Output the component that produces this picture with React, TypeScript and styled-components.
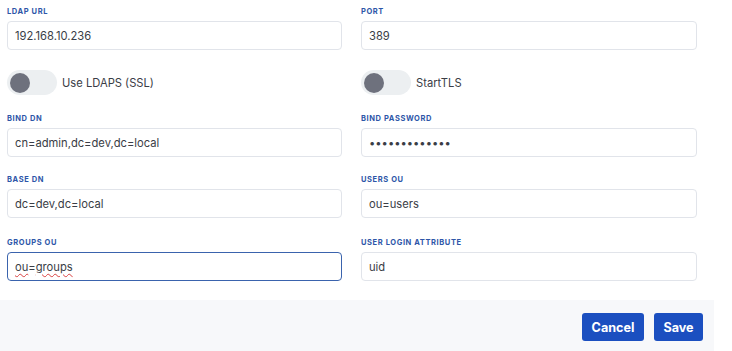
import React from "react";
import styled, { createGlobalStyle } from "styled-components";

const GlobalStyle = createGlobalStyle`
  html, body {
    margin: 0;
    padding: 0;
    background: #ffffff;
    font-family: Inter, "Noto Sans", "Liberation Sans", sans-serif;
  }
`;

const Panel = styled.div`
  width: 714px;
  background: #ffffff;
`;

const FormGrid = styled.div`
  display: grid;
  grid-template-columns: 335px 336px;
  column-gap: 19px;
  padding: 7px 17px 0 7px;
  height: 300px;
  box-sizing: border-box;
  align-content: start;
`;

const Field = styled.div<{ $mb?: number }>`
  display: flex;
  flex-direction: column;
  margin-bottom: ${(p) => p.$mb ?? 24}px;
`;

const Label = styled.label`
  font-size: 7.5px;
  font-weight: 700;
  letter-spacing: 0.6px;
  text-transform: uppercase;
  color: #2d56a8;
  line-height: 10px;
  margin-bottom: 4px;
`;

const inputBox = `
  height: 29px;
  box-sizing: border-box;
  border-radius: 4px;
  padding: 0 7px;
  font-family: Inter, "Noto Sans", "Liberation Sans", sans-serif;
  font-size: 11.2px;
  color: #3a3d46;
  background: #ffffff;
  outline: none;
`;

const Input = styled.input`
  ${inputBox}
  border: 1px solid #e1e4ea;
`;

const FocusedInput = styled.div`
  ${inputBox}
  border: 1px solid #3a63ad;
  display: flex;
  align-items: center;
`;

const Misspelled = styled.span`
  text-decoration: underline wavy #d94040;
  text-decoration-thickness: 1px;
  text-underline-offset: 2px;
`;

const ToggleRow = styled.div`
  display: flex;
  align-items: center;
  gap: 5px;
  height: 25px;
  margin-bottom: 19px;
  margin-top: -4px;
`;

const Track = styled.div`
  width: 50px;
  height: 25px;
  border-radius: 13px;
  background: #eceff1;
  display: flex;
  align-items: center;
  padding-left: 3px;
  box-sizing: border-box;
`;

const Knob = styled.div`
  width: 20px;
  height: 20px;
  border-radius: 50%;
  background: #6e717d;
`;

const ToggleText = styled.span`
  font-size: 11.2px;
  color: #3a3d46;
`;

const Footer = styled.div`
  height: 51px;
  background: #f7f8fa;
  display: flex;
  justify-content: flex-end;
  align-items: flex-start;
  gap: 10px;
  padding: 13px 11px 0 0;
  box-sizing: border-box;
`;

const Button = styled.button<{ $w: number }>`
  width: ${(p) => p.$w}px;
  height: 28px;
  border: none;
  border-radius: 3px;
  background: #1b4fc0;
  color: #ffffff;
  font-family: Inter, "Noto Sans", "Liberation Sans", sans-serif;
  font-size: 12.6px;
  font-weight: 700;
  cursor: pointer;
`;

const Toggle: React.FC<{ label: string }> = ({ label }) => (
  <ToggleRow>
    <Track>
      <Knob />
    </Track>
    <ToggleText>{label}</ToggleText>
  </ToggleRow>
);

export default function App() {
  return (
    <>
      <GlobalStyle />
      <Panel>
        <FormGrid>
          <Field>
            <Label>LDAP URL</Label>
            <Input readOnly value="192.168.10.236" />
          </Field>
          <Field>
            <Label>Port</Label>
            <Input readOnly value="389" />
          </Field>
          <Toggle label="Use LDAPS (SSL)" />
          <Toggle label="StartTLS" />
          <Field $mb={18}>
            <Label>Bind DN</Label>
            <Input readOnly value="cn=admin,dc=dev,dc=local" />
          </Field>
          <Field $mb={18}>
            <Label>Bind Password</Label>
            <Input readOnly type="password" value="adminpassword" />
          </Field>
          <Field $mb={20}>
            <Label>Base DN</Label>
            <Input readOnly value="dc=dev,dc=local" />
          </Field>
          <Field $mb={20}>
            <Label>Users OU</Label>
            <Input readOnly value="ou=users" />
          </Field>
          <Field $mb={0}>
            <Label>Groups OU</Label>
            <FocusedInput role="textbox">
              <Misspelled>ou</Misspelled>=<Misspelled>groups</Misspelled>
            </FocusedInput>
          </Field>
          <Field $mb={0}>
            <Label>User Login Attribute</Label>
            <Input readOnly value="uid" />
          </Field>
        </FormGrid>
        <Footer>
          <Button $w={62}>Cancel</Button>
          <Button $w={49}>Save</Button>
        </Footer>
      </Panel>
    </>
  );
}
